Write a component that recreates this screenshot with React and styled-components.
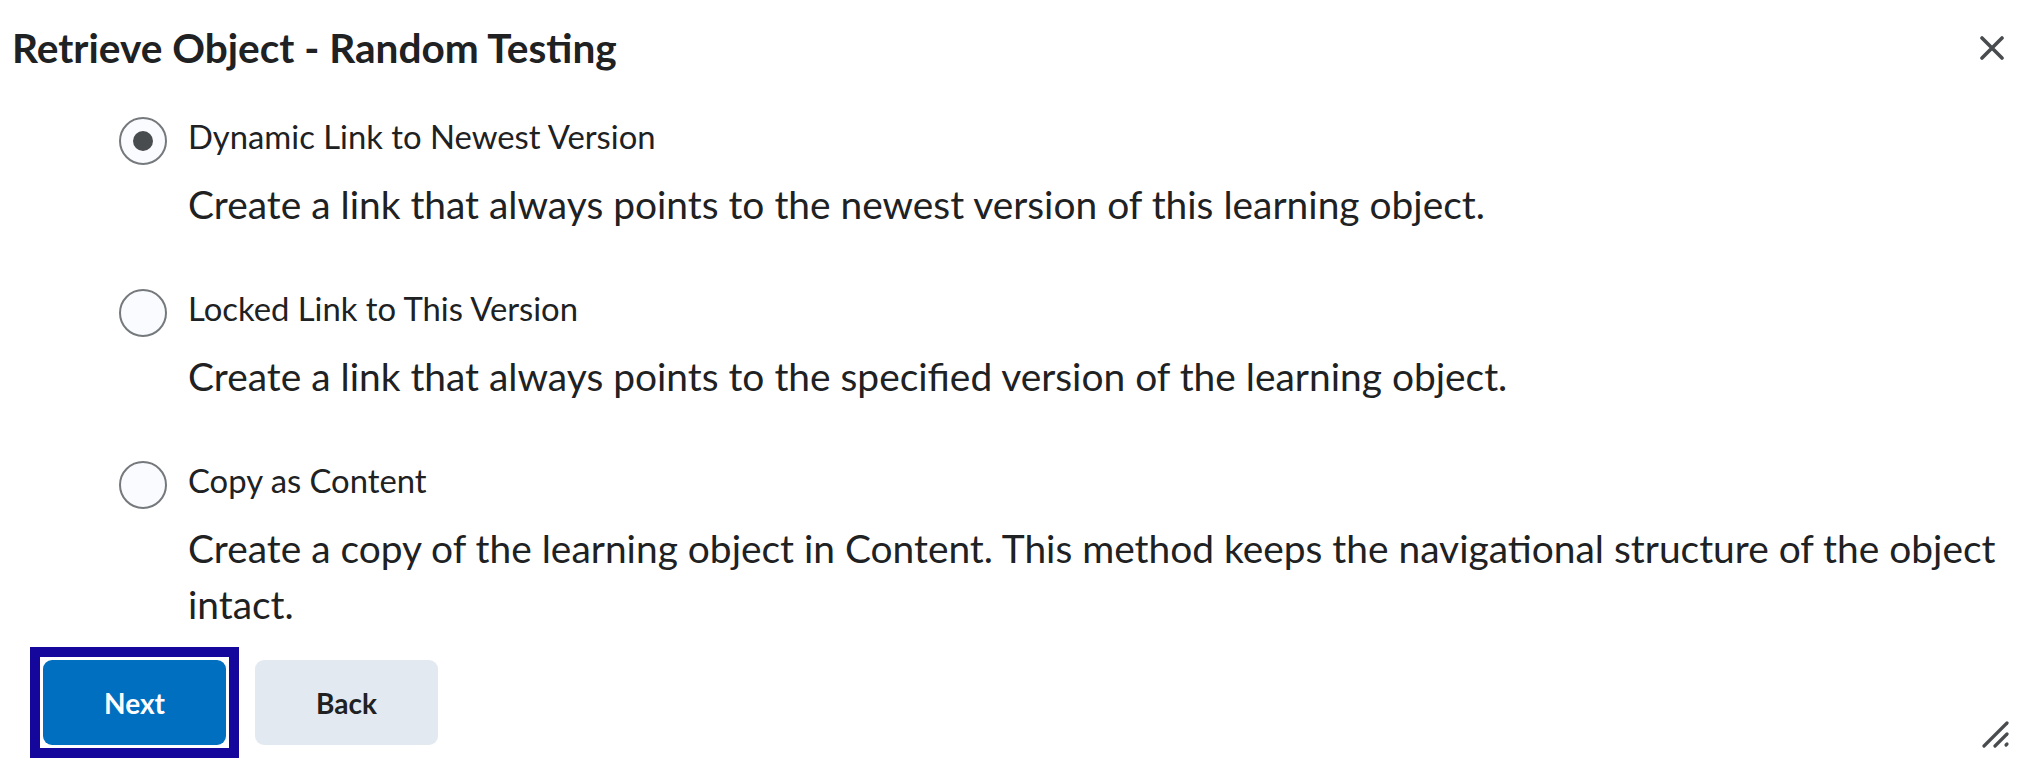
import React, { useState } from "react";
import styled, { createGlobalStyle } from "styled-components";

const GlobalStyle = createGlobalStyle`
  html, body {
    margin: 0;
    padding: 0;
    background: #ffffff;
  }
  body {
    font-family: Lato, "Open Sans", sans-serif;
    color: #202122;
  }
`;

const OPTIONS = [
  {
    id: "dynamic",
    label: "Dynamic Link to Newest Version",
    description:
      "Create a link that always points to the newest version of this learning object.",
  },
  {
    id: "locked",
    label: "Locked Link to This Version",
    description:
      "Create a link that always points to the specified version of the learning object.",
  },
  {
    id: "copy",
    label: "Copy as Content",
    description:
      "Create a copy of the learning object in Content. This method keeps the navigational structure of the object intact.",
  },
];

// dialog shell
const Dialog = styled.div`
  position: relative;
  width: 2020px;
  height: 782px;
  box-sizing: border-box;
  display: flex;
  flex-direction: column;
`;
const Header = styled.header`
  display: flex;
  align-items: center;
  justify-content: space-between;
  padding: 24px 16px 0 12px;
`;
const Title = styled.h1`
  margin: 0;
  font-size: 40.6px;
  line-height: 48px;
  font-weight: 700;
  color: #202122;
`;
const CloseButton = styled.button`
  display: flex;
  align-items: center;
  justify-content: center;
  width: 24px;
  height: 24px;
  padding: 0;
  border: none;
  background: transparent;
  cursor: pointer;
`;

// radio list
const OptionList = styled.div`
  display: flex;
  flex-direction: column;
  gap: 57px;
  padding: 45px 16px 0 119px;
`;
const Option = styled.div`
  display: flex;
  flex-direction: column;
  gap: 11px;
`;
const RadioRow = styled.label`
  display: flex;
  align-items: center;
  gap: 21px;
  height: 48px;
  cursor: pointer;
`;
const RadioCircle = styled.span`
  flex: none;
  width: 48px;
  height: 48px;
  box-sizing: border-box;
  border-radius: 50%;
  border: 2px solid #75797c;
  background: #f9fbff;
  display: flex;
  align-items: center;
  justify-content: center;

  &::after {
    content: "";
    width: 20px;
    height: 20px;
    border-radius: 50%;
    background: #494c4e;
    display: ${(p) => (p.checked ? "block" : "none")};
  }
`;
const RadioLabel = styled.span`
  font-size: 32.8px;
  line-height: 48px;
  margin-top: -8px;
  color: #202122;
`;
const Description = styled.p`
  margin: 0;
  padding-left: 69px;
  font-size: 38.9px;
  line-height: 56px;
  color: #202122;
`;

// footer buttons
const Footer = styled.div`
  display: flex;
  align-items: center;
  gap: 16px;
  padding: 15px 0 0 30px;
`;
const FocusFrame = styled.span`
  display: flex;
  padding: 3px;
  border: 10px solid #15069c;
`;
const Button = styled.button`
  min-width: 183px;
  height: 85px;
  border: none;
  border-radius: 9px;
  font-family: Lato, sans-serif;
  font-size: 28px;
  font-weight: 700;
  cursor: pointer;
  background: ${(p) => (p.primary ? "#006fbf" : "#e3e9f1")};
  color: ${(p) => (p.primary ? "#ffffff" : "#202122")};
`;
const ResizeGrip = styled.div`
  position: absolute;
  right: 10px;
  bottom: 34px;
  width: 28px;
  height: 28px;
`;

function CloseIcon() {
  return (
    <svg width="24" height="24" viewBox="0 0 24 24">
      <path
        d="M2 2 L22 22 M22 2 L2 22"
        stroke="#494c4e"
        strokeWidth="3.6"
        strokeLinecap="round"
      />
    </svg>
  );
}

function GripIcon() {
  return (
    <svg width="28" height="28" viewBox="0 0 28 28">
      <g stroke="#494c4e" strokeWidth="3.2" strokeLinecap="round">
        <path d="M2 26 L25 3" />
        <path d="M13 26 L25 14" />
        <path d="M24 25 L25 24" />
      </g>
    </svg>
  );
}

function App() {
  const [selected, setSelected] = useState("dynamic");

  return (
    <Dialog>
      <GlobalStyle />
      <Header>
        <Title>Retrieve Object - Random Testing</Title>
        <CloseButton aria-label="Close">
          <CloseIcon />
        </CloseButton>
      </Header>
      <OptionList>
        {OPTIONS.map((option) => (
          <Option key={option.id}>
            <RadioRow onClick={() => setSelected(option.id)}>
              <RadioCircle checked={selected === option.id} />
              <RadioLabel>{option.label}</RadioLabel>
            </RadioRow>
            <Description>{option.description}</Description>
          </Option>
        ))}
      </OptionList>
      <Footer>
        <FocusFrame>
          <Button primary>Next</Button>
        </FocusFrame>
        <Button>Back</Button>
      </Footer>
      <ResizeGrip>
        <GripIcon />
      </ResizeGrip>
    </Dialog>
  );
}

export default App;
